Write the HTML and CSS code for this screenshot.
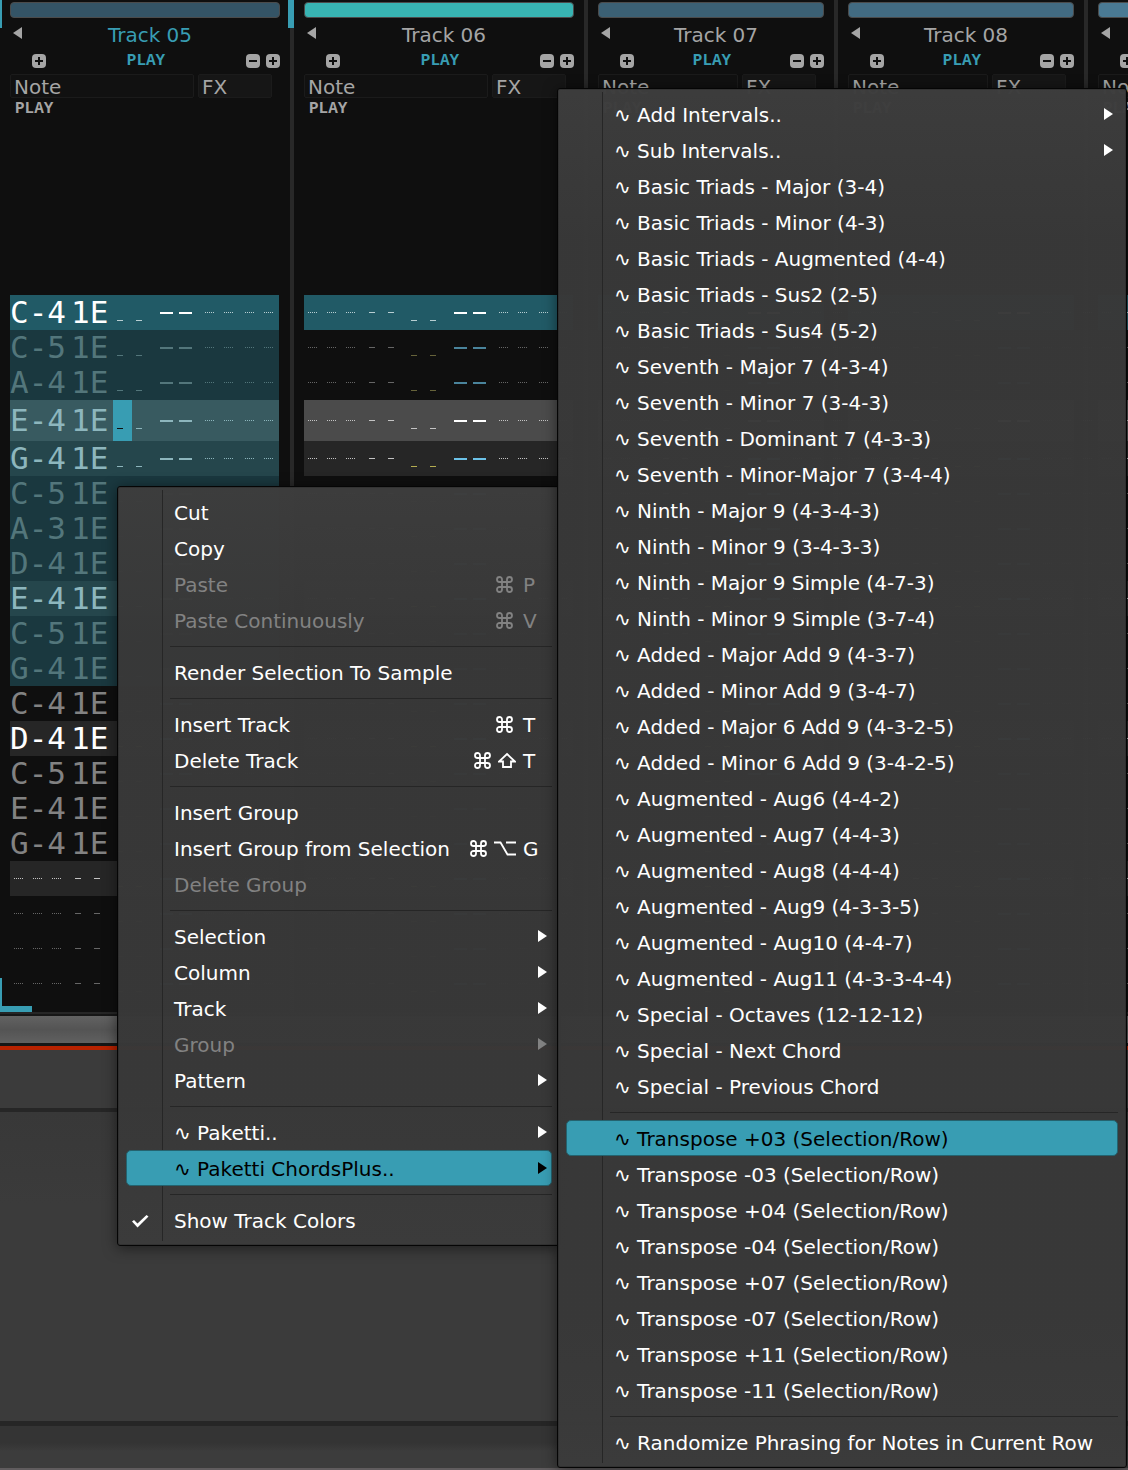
FILE: index.html
```html
<!DOCTYPE html>
<html lang="en">
<head>
<meta charset="utf-8">
<title>Pattern Editor</title>
<link rel="stylesheet" href="styles.css">
</head>
<body>
<svg class="defs" aria-hidden="true">
  <symbol id="cmd" viewBox="0 0 17 17"><path d="M6 6V3.500A2.500 2.500 0 1 0 3.500 6H13.500A2.500 2.500 0 1 0 11 3.500V13.500A2.500 2.500 0 1 0 13.500 11H3.500A2.500 2.500 0 1 0 6 13.500Z" fill="none" stroke="currentColor" stroke-width="1.800"/></symbol>
  <symbol id="shift" viewBox="0 0 18 17"><path d="M9 2L17 9.500H13V15H5V9.500H1Z" fill="none" stroke="currentColor" stroke-width="1.800"/></symbol>
  <symbol id="option" viewBox="0 0 22 17"><path d="M0 2.500H6.500L13.500 14.500H22M12 2.500H22" fill="none" stroke="currentColor" stroke-width="1.800"/></symbol>
  <symbol id="tick" viewBox="0 0 18 14"><path d="M1 7.500L3 6L6.500 9.500L15.500 1L17.500 2.500L6.500 13.500Z" fill="currentColor"/></symbol>
</svg>
<main class="app">
  <section class="tracks" id="tracks" aria-label="Pattern"></section>
  <div class="scrollbar"></div>
  <div class="record-line"></div>
  <div class="toolbar"></div>
  <div class="panel"></div>
  <footer class="status"></footer>

  <ul class="menu menu-context">
    <li><button>Cut</button></li>
    <li><button>Copy</button></li>
    <li><button disabled>Paste<span class="keys"><svg class="k-cmd"><use href="#cmd"/></svg><kbd>P</kbd></span></button></li>
    <li><button disabled>Paste Continuously<span class="keys"><svg class="k-cmd"><use href="#cmd"/></svg><kbd>V</kbd></span></button></li>
    <li class="sep"></li>
    <li><button>Render Selection To Sample</button></li>
    <li class="sep"></li>
    <li><button>Insert Track<span class="keys"><svg class="k-cmd"><use href="#cmd"/></svg><kbd>T</kbd></span></button></li>
    <li><button>Delete Track<span class="keys"><svg class="k-cmd"><use href="#cmd"/></svg><svg class="k-shift"><use href="#shift"/></svg><kbd>T</kbd></span></button></li>
    <li class="sep"></li>
    <li><button>Insert Group</button></li>
    <li><button>Insert Group from Selection<span class="keys"><svg class="k-cmd"><use href="#cmd"/></svg><svg class="k-option"><use href="#option"/></svg><kbd>G</kbd></span></button></li>
    <li><button disabled>Delete Group</button></li>
    <li class="sep"></li>
    <li><button class="sub">Selection</button></li>
    <li><button class="sub">Column</button></li>
    <li><button class="sub">Track</button></li>
    <li><button class="sub" disabled>Group</button></li>
    <li><button class="sub">Pattern</button></li>
    <li class="sep"></li>
    <li><button class="sub">∿ Paketti..</button></li>
    <li><button class="sub active">∿ Paketti ChordsPlus..</button></li>
    <li class="sep"></li>
    <li><button class="checked"><svg class="tick"><use href="#tick"/></svg>Show Track Colors</button></li>
  </ul>

  <ul class="menu menu-chords">
    <li><button class="sub">∿ Add Intervals..</button></li>
    <li><button class="sub">∿ Sub Intervals..</button></li>
    <li><button>∿ Basic Triads - Major (3-4)</button></li>
    <li><button>∿ Basic Triads - Minor (4-3)</button></li>
    <li><button>∿ Basic Triads - Augmented (4-4)</button></li>
    <li><button>∿ Basic Triads - Sus2 (2-5)</button></li>
    <li><button>∿ Basic Triads - Sus4 (5-2)</button></li>
    <li><button>∿ Seventh - Major 7 (4-3-4)</button></li>
    <li><button>∿ Seventh - Minor 7 (3-4-3)</button></li>
    <li><button>∿ Seventh - Dominant 7 (4-3-3)</button></li>
    <li><button>∿ Seventh - Minor-Major 7 (3-4-4)</button></li>
    <li><button>∿ Ninth - Major 9 (4-3-4-3)</button></li>
    <li><button>∿ Ninth - Minor 9 (3-4-3-3)</button></li>
    <li><button>∿ Ninth - Major 9 Simple (4-7-3)</button></li>
    <li><button>∿ Ninth - Minor 9 Simple (3-7-4)</button></li>
    <li><button>∿ Added - Major Add 9 (4-3-7)</button></li>
    <li><button>∿ Added - Minor Add 9 (3-4-7)</button></li>
    <li><button>∿ Added - Major 6 Add 9 (4-3-2-5)</button></li>
    <li><button>∿ Added - Minor 6 Add 9 (3-4-2-5)</button></li>
    <li><button>∿ Augmented - Aug6 (4-4-2)</button></li>
    <li><button>∿ Augmented - Aug7 (4-4-3)</button></li>
    <li><button>∿ Augmented - Aug8 (4-4-4)</button></li>
    <li><button>∿ Augmented - Aug9 (4-3-3-5)</button></li>
    <li><button>∿ Augmented - Aug10 (4-4-7)</button></li>
    <li><button>∿ Augmented - Aug11 (4-3-3-4-4)</button></li>
    <li><button>∿ Special - Octaves (12-12-12)</button></li>
    <li><button>∿ Special - Next Chord</button></li>
    <li><button>∿ Special - Previous Chord</button></li>
    <li class="sep"></li>
    <li><button class="active">∿ Transpose +03 (Selection/Row)</button></li>
    <li><button>∿ Transpose -03 (Selection/Row)</button></li>
    <li><button>∿ Transpose +04 (Selection/Row)</button></li>
    <li><button>∿ Transpose -04 (Selection/Row)</button></li>
    <li><button>∿ Transpose +07 (Selection/Row)</button></li>
    <li><button>∿ Transpose -07 (Selection/Row)</button></li>
    <li><button>∿ Transpose +11 (Selection/Row)</button></li>
    <li><button>∿ Transpose -11 (Selection/Row)</button></li>
    <li class="sep"></li>
    <li><button>∿ Randomize Phrasing for Notes in Current Row</button></li>
  </ul>
</main>
<script src="tracks.js"></script>
</body>
</html>
```
FILE: styles.css
```css
* { box-sizing: border-box; }
body {
  margin: 0;
  background: #3b3b3b;
  color: #a5a5a5;
  font: 20px/24px "DejaVu Sans", sans-serif;
}
button { font: inherit; color: inherit; border: 0; padding: 0; background: none; }
.defs { position: absolute; width: 0; height: 0; }
.app {
  position: relative;
  display: flex;
  flex-direction: column;
  min-height: 100vh;
  overflow: hidden;
}

/* Tracks */
.tracks {
  display: flex;
  background: #0f0f0f;
  border-bottom: 2px solid #262626;
  overflow: hidden;
}
.track {
  position: relative;
  flex: none;
  width: 250px;
  padding: 2px 10px 11px;
  border-right: 4px solid #282828;
}
.track.wide { width: 294px; }
.colour { height: 16px; border: 1px solid #4b4b4b; border-radius: 4px; }
.c5 { background: #345466; }
.c6 { background: #38b4b3; }
.c7 { background: #3b6074; }
.c8 { background: #426b82; }
.c9 { background: #4a7a94; }
.title { display: flex; align-items: center; height: 34px; padding: 0 2px 0 3px; }
.title h2 { flex: 1; margin: 0; font-size: 20px; font-weight: 400; text-align: center; }
.collapse {
  width: 9px;
  height: 12px;
  margin-bottom: 4px;
  background: #a5a5a5;
  clip-path: polygon(100% 0, 0 50%, 100% 100%);
}
.controls { display: flex; align-items: center; gap: 6px; height: 18px; padding-left: 22px; }
.play { font: bold 16px/18px "Liberation Mono", monospace; }
.controls .play { flex: 1; text-align: center; color: #389db3; }
.box { width: 14px; height: 14px; border-radius: 4px; background: #a5a5a5; color: #0f0f0f; display: flex; }
.box svg { width: 14px; height: 14px; }
.columns { display: flex; gap: 4px; padding: 4px 8px 0 0; }
.columns span { height: 24px; padding-left: 3px; border: 1px solid #1b1b1b; border-radius: 2px; }
.columns .note { flex: 1; background: #111; }
.columns .fx { width: 74px; background: #161616; }
.track > .play { padding: 2px 5px 0; height: 20px; }
.selected .title h2 { color: #389db3; }
.edge { position: absolute; background: #389db3; }
.edge.tl { left: 0; top: 0; width: 2px; height: 28px; }
.edge.tr { right: -4px; top: 0; width: 6px; height: 28px; }
.edge.bl { left: 0; bottom: 0; width: 2px; height: 34px; }
.edge.base { left: 0; bottom: 0; width: 32px; height: 6px; }

/* Pattern rows */
.rows { padding-top: 177px; }
.row {
  display: flex;
  align-items: center;
  height: 35px;
  color: #828282;
  --dim: #666;
  --vol: #66633a;
  --fx: #4a849c;
}
.wide .row { width: 269px; }
.row.beat { background: #262626; color: #fff; --dim: #c4c4c4; --vol: #b5ad51; --fx: #6cc2e8; }
.selected .row.sel { background: #1a383f; color: #53767b; --dim: #53767b; --vol: #53767b; --fx: #53767b; }
.selected .row.sel.beat { background: #25464c; color: #8db6bd; --dim: #8db6bd; --vol: #8db6bd; --fx: #8db6bd; }
.row.current, .selected .row.current.sel { height: 41px; }
.row.current { background: #4b4b4b; --dim: #c4c4c4; --vol: #c4c4c4; --fx: #fff; }
.selected .row.sel.current { background: #385a60; color: #8db6bd; --dim: #8db6bd; --vol: #8db6bd; --fx: #8db6bd; }
.row.playing, .selected .row.sel.playing { background: #215a66; color: #fff; --dim: #b8ced2; --vol: #b8ced2; --fx: #fff; }
.cell { display: flex; align-items: center; flex: none; align-self: stretch; white-space: nowrap; }
.cell i { width: 19px; height: 2px; display: flex; padding-left: 4px; }
.cell i::before { content: ""; height: 1px; width: 6px; background: var(--dim); }
.cell.dots i::before { width: 9px; background: repeating-linear-gradient(90deg, var(--dim) 0 1px, transparent 1px 2px); }
.cell.text { font: 31px/35px "DejaVu Sans Mono", monospace; }
.note3 { width: 57px; margin-right: 4px; }
.two { width: 38px; }
.vol { margin: 0 6px 0 4px; align-items: flex-end; padding-bottom: 8px; }
.vol i::before { background: var(--vol); }
.current .vol { padding-bottom: 11px; }
.fxnum { margin-right: 6px; }
.fxnum i { padding-left: 3px; }
.fxnum i::before { width: 13px; height: 2px; background: var(--fx); }
.fxval { margin-left: 2px; }
.cursor { background: linear-gradient(#389db3, #389db3) left / 19px 100% no-repeat; }
.cursor i:first-child::before { background: #0f0f0f; }

/* Lower panels */
.scrollbar {
  flex: none;
  height: 32px;
  border: solid #161616;
  border-width: 2px 0 3px;
  background: linear-gradient(#626262, #545454 50%, #606060);
}
.record-line { flex: none; height: 4px; background: #b82200; }
.toolbar { flex: none; height: 62px; background: #3b3b3b; border-bottom: 4px solid #262626; }
.panel { flex: 1; background: linear-gradient(#383838, #3b3b3b 30%); border-bottom: 5px solid #262626; }
.status { flex: none; height: 44px; background: linear-gradient(#343434 40%, #3c3c3c 60%); border-bottom: 2px solid #605c5e; }

/* Menus */
.menu {
  position: absolute;
  margin: 0;
  padding: 7px 8px;
  list-style: none;
  border: 1px solid #050505;
  border-radius: 3px;
  background:
    linear-gradient(#262626, #262626) 44px 3px / 1px calc(100% - 7px) no-repeat,
    linear-gradient(rgba(61, 61, 61, .98), rgba(56, 56, 56, .98) 150px, rgba(56, 56, 56, .98) calc(100% - 150px), rgba(59, 59, 59, .98));
  box-shadow: 0 2px 14px rgba(0, 0, 0, .5), inset 0 0 0 1px rgba(0, 0, 0, .15);
  color: #fff;
}
.menu-context { left: 117px; top: 486px; width: 444px; }
.menu-chords { left: 557px; top: 88px; width: 570px; }
.menu button {
  display: flex;
  align-items: center;
  width: 100%;
  height: 36px;
  padding: 2px 12px 0 47px;
  border: 1px solid transparent;
  border-radius: 5px;
  text-align: left;
  white-space: pre;
}
.menu button:disabled { color: #828282; }
.menu .active { background: #389db3; border-color: #24636f; color: #000; }
.menu .sub { padding-right: 4px; }
.sub::after {
  content: "";
  width: 9px;
  height: 12px;
  margin: 0 0 2px auto;
  background: currentColor;
  clip-path: polygon(0 0, 100% 50%, 0 100%);
}
.sep { height: 16px; padding: 8px 0 0 44px; }
.sep::before { content: ""; display: block; height: 1px; background: #262626; }
.keys { display: flex; align-items: center; gap: 7px; margin-left: auto; }
.keys svg { height: 17px; margin-bottom: 2px; }
.k-cmd { width: 17px; }
.k-cmd:last-of-type { margin-right: 3px; }
.k-shift { width: 18px; }
.k-option { width: 22px; }
.keys kbd { width: 16px; font: inherit; }
.menu .checked { padding-left: 4px; }
.tick { width: 18px; height: 14px; margin-right: 25px; }
```
FILE: tracks.js
```js
const notes = ["C-4", "C-5", "A-4", "E-4", "G-4", "C-5", "A-3", "D-4", "E-4", "C-5", "G-4", "C-4", "D-4", "C-5", "E-4", "G-4"];
const beats = [0, 4, 8, 12, 16];
const ROWS = 20;
const CURRENT = 3;

const plus = '<svg viewBox="0 0 14 14"><path d="M3 7H11M7 3V11" stroke="currentColor" stroke-width="2"/></svg>';
const minus = '<svg viewBox="0 0 14 14"><path d="M3 7H11" stroke="currentColor" stroke-width="2"/></svg>';
const dashes = (n) => "<i></i>".repeat(n);

function row(i, selected) {
  const cls = ["row"];
  if (i === 0) cls.push("playing");
  if (i === CURRENT) cls.push("current");
  if (beats.includes(i)) cls.push("beat");
  if (selected && i < 11) cls.push("sel");
  const note = selected && notes[i];
  const cursor = selected && i === CURRENT ? " cursor" : "";
  return `<div class="${cls.join(" ")}">
    ${note ? `<span class="cell note3 text">${note}</span><span class="cell two text">1E</span>`
           : `<span class="cell note3 dots">${dashes(3)}</span><span class="cell two">${dashes(2)}</span>`}
    <span class="cell two vol${cursor}">${dashes(2)}</span>
    <span class="cell two fxnum">${dashes(2)}</span>
    <span class="cell two dots">${dashes(2)}</span>
    <span class="cell two dots fxval">${dashes(2)}</span>
  </div>`;
}

function track(n) {
  const selected = n === 5;
  const wide = n < 7;
  return `<section class="track${wide ? " wide" : ""}${selected ? " selected" : ""}">
    <div class="colour c${n}"></div>
    <div class="title"><button class="collapse" aria-label="Collapse"></button><h2>Track 0${n}</h2></div>
    <div class="controls"><button class="box" aria-label="Add column">${plus}</button><span class="play">PLAY</span>
      <button class="box" aria-label="Remove effect">${minus}</button><button class="box" aria-label="Add effect">${plus}</button></div>
    <div class="columns"><span class="note">Note</span><span class="fx">FX</span></div>
    <div class="play">PLAY</div>
    <div class="rows">${Array.from({ length: ROWS }, (_, i) => row(i, selected)).join("")}</div>
    ${selected ? ["tl", "tr", "bl", "base"].map((e) => `<span class="edge ${e}"></span>`).join("") : ""}
  </section>`;
}

document.getElementById("tracks").innerHTML = [5, 6, 7, 8, 9].map(track).join("");
```
